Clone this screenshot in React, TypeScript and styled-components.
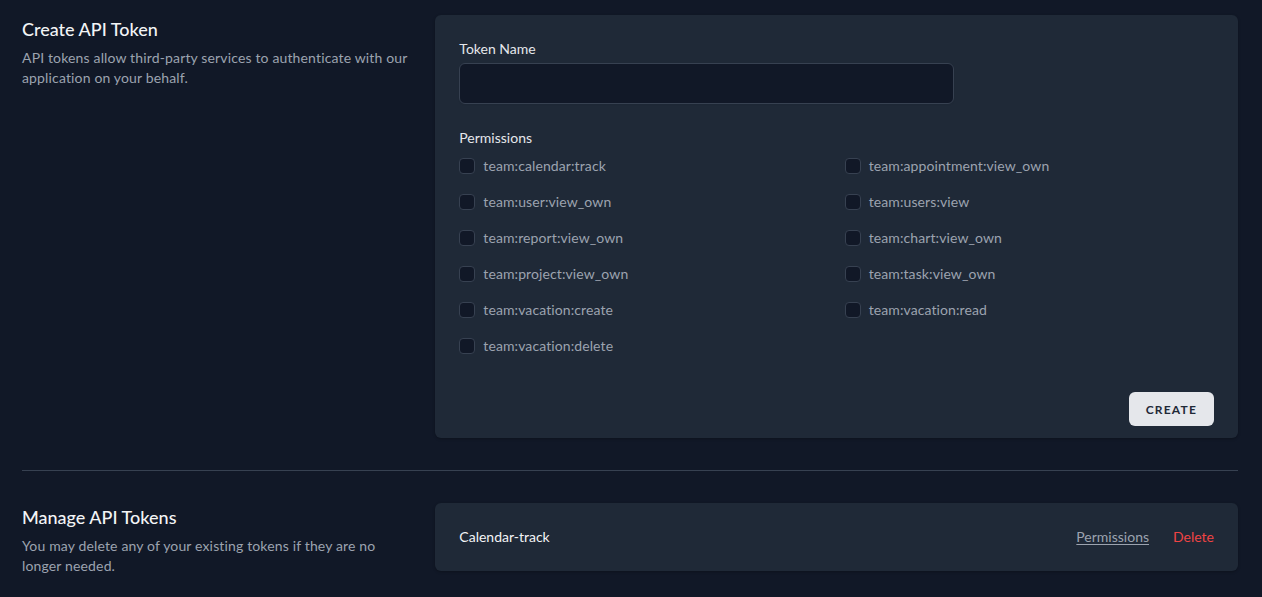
import styled, { createGlobalStyle } from 'styled-components';

const GlobalStyle = createGlobalStyle`
  * { box-sizing: border-box; }
  body {
    margin: 0;
    background: #111827;
    font-family: Lato, 'Noto Sans', sans-serif;
    -webkit-font-smoothing: antialiased;
  }
`;

const Page = styled.div`
  min-height: 597px;
  background: #111827;
  padding: 15px 24px 0 22px;
`;

const Section = styled.div`
  display: grid;
  grid-template-columns: repeat(3, 1fr);
  gap: 24px;
  align-items: start;
`;

const Intro = styled.div``;

const Heading = styled.h3`
  margin: 0;
  font-size: 18px;
  line-height: 28px;
  font-weight: 500;
  color: #f3f4f6;
`;

const Desc = styled.p`
  margin: 5px 0 0;
  font-size: 14px;
  line-height: 20px;
  letter-spacing: 0.15px;
  color: #9ca3af;
`;

const Card = styled.div`
  grid-column: span 2;
  background: #1f2937;
  border-radius: 6px;
  box-shadow: 0 1px 3px rgba(0, 0, 0, 0.25);
`;

const CardBody = styled.div`
  padding: 24px;
`;

const FieldGrid = styled.div`
  display: grid;
  grid-template-columns: repeat(6, 1fr);
  gap: 24px;
`;

const Field = styled.div<{ span: number }>`
  grid-column: span ${(p) => p.span};
`;

const Label = styled.label`
  display: block;
  font-size: 14px;
  line-height: 20px;
  font-weight: 400;
  color: #e5e7eb;
`;

const Input = styled.input`
  display: block;
  width: 100%;
  height: 41px;
  margin-top: 4px;
  background: #111827;
  border: 1px solid #374151;
  border-radius: 6px;
  color: #d1d5db;
  font: inherit;
  padding: 0 12px;
  outline: none;
  box-shadow: 0 1px 2px rgba(0, 0, 0, 0.05);
`;

const PermGrid = styled.div`
  margin-top: 8px;
  display: grid;
  grid-template-columns: 1fr 1fr;
  gap: 16px;
`;

const PermItem = styled.label`
  display: flex;
  align-items: center;
  height: 20px;
`;

const Box = styled.span`
  width: 16px;
  height: 16px;
  border: 1px solid #374151;
  background: #111827;
  border-radius: 4px;
  flex-shrink: 0;
`;

const PermText = styled.span`
  margin-left: 8px;
  font-size: 14px;
  line-height: 20px;
  color: #9ca3af;
  letter-spacing: 0.1px;
`;

const Actions = styled.div`
  display: flex;
  justify-content: flex-end;
  align-items: center;
  padding: 12px 24px;
`;

const Button = styled.button`
  height: 34px;
  padding: 0 16px;
  background: #e5e7eb;
  border: 1px solid transparent;
  border-radius: 6px;
  color: #1f2937;
  font-family: inherit;
  font-size: 12px;
  font-weight: 700;
  letter-spacing: 0.1em;
  text-transform: uppercase;
  cursor: pointer;
`;

const Divider = styled.div`
  padding: 32px 0;
`;

const Rule = styled.div`
  border-top: 1px solid #374151;
`;

const TokenRow = styled.div`
  display: flex;
  align-items: center;
  justify-content: space-between;
  padding: 24px;
`;

const TokenName = styled.div`
  font-size: 14px;
  line-height: 20px;
  color: #f3f4f6;
`;

const TokenActions = styled.div`
  display: flex;
  align-items: center;
  gap: 24px;
`;

const LinkButton = styled.button<{ danger?: boolean }>`
  display: block;
  background: none;
  border: 0;
  padding: 0;
  font-family: inherit;
  font-size: 14px;
  line-height: 20px;
  cursor: pointer;
  color: ${(p) => (p.danger ? '#ef4444' : '#9ca3af')};
  text-decoration: ${(p) => (p.danger ? 'none' : 'underline')};
  text-underline-offset: 2px;
`;

const permissions = [
  'team:calendar:track',
  'team:appointment:view_own',
  'team:user:view_own',
  'team:users:view',
  'team:report:view_own',
  'team:chart:view_own',
  'team:project:view_own',
  'team:task:view_own',
  'team:vacation:create',
  'team:vacation:read',
  'team:vacation:delete',
];

const App = () => {
  return (
    <Page>
      <GlobalStyle />
      <Section>
        <Intro>
          <Heading>Create API Token</Heading>
          <Desc>
            API tokens allow third-party services to authenticate with our
            application on your behalf.
          </Desc>
        </Intro>
        <Card>
          <CardBody>
            <FieldGrid>
              <Field span={4}>
                <Label>Token Name</Label>
                <Input type='text' />
              </Field>
              <Field span={6}>
                <Label>Permissions</Label>
                <PermGrid>
                  {permissions.map((p) => (
                    <PermItem key={p}>
                      <Box />
                      <PermText>{p}</PermText>
                    </PermItem>
                  ))}
                </PermGrid>
              </Field>
            </FieldGrid>
          </CardBody>
          <Actions>
            <Button>Create</Button>
          </Actions>
        </Card>
      </Section>

      <Divider>
        <Rule />
      </Divider>

      <Section>
        <Intro>
          <Heading>Manage API Tokens</Heading>
          <Desc>
            You may delete any of your existing tokens if they are no longer
            needed.
          </Desc>
        </Intro>
        <Card>
          <TokenRow>
            <TokenName>Calendar-track</TokenName>
            <TokenActions>
              <LinkButton>Permissions</LinkButton>
              <LinkButton danger>Delete</LinkButton>
            </TokenActions>
          </TokenRow>
        </Card>
      </Section>
    </Page>
  );
};

export default App;
